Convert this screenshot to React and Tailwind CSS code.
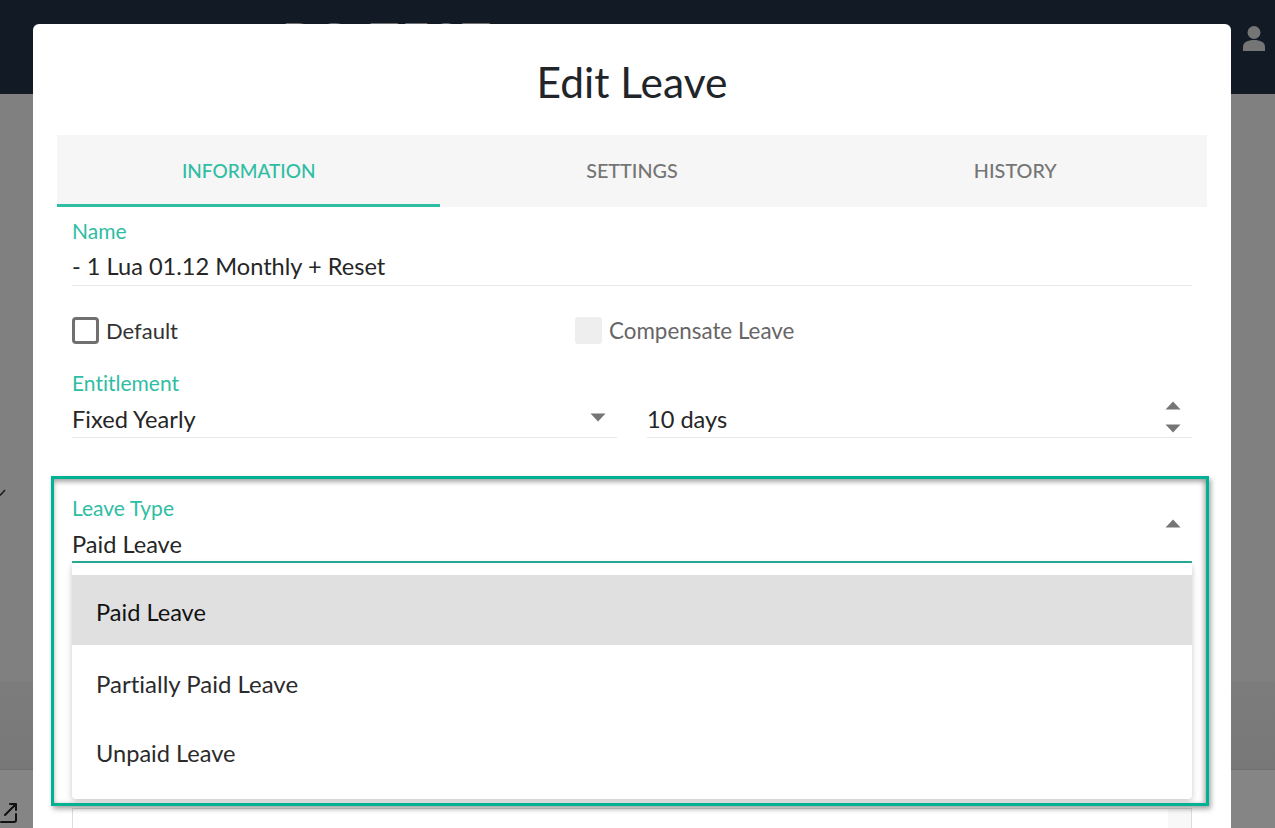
import React from "react";

const font = { fontFamily: 'Lato, "Noto Sans", sans-serif' };

function Tri({ up = false, className = "" }) {
  return (
    <svg width="16" height="9" viewBox="0 0 16 9" className={className}>
      <path d={up ? "M8 0.5 L15.5 8.5 L0.5 8.5 Z" : "M0.5 0.5 L15.5 0.5 L8 8.5 Z"} fill="#757575" />
    </svg>
  );
}

function Tab({ label, active }) {
  return (
    <div
      className={`flex-1 flex items-center justify-center h-[72px] pt-[3px] font-medium border-b-[3px] ${
        active ? "text-[19px] text-[#2fbda3] border-[#2fbda3]" : "text-[19.8px] text-[#757575] border-transparent"
      }`}
    >
      {label}
    </div>
  );
}

function Check({ label, disabled }) {
  return (
    <div className="flex items-center gap-[7px]">
      <div
        className={
          disabled
            ? "w-[27px] h-[27px] rounded-[3px] bg-[#eeeeee]"
            : "w-[27px] h-[27px] rounded-[4px] border-[3px] border-[#707070]"
        }
      />
      <span className={`leading-[30px] ${disabled ? "text-[22.4px] text-[#666666]" : "text-[22px] text-[#333333]"}`}>{label}</span>
    </div>
  );
}

export default function App() {
  return (
    <div className="relative w-[1275px] h-[828px] overflow-hidden bg-[#808080] [font-variant-ligatures:none]" style={font}>
      <header className="h-[94px] bg-[#111a25] flex justify-between pl-[282px] pr-[9px]">
        <div className="text-[48px] font-bold leading-none mt-[16px] text-[#6f7074] tracking-[3px]">PO TEST</div>
        <svg width="24" height="26" viewBox="0 0 24 26" className="mt-[25px]">
          <circle cx="12" cy="7.5" r="6.5" fill="#757575" />
          <path d="M1 26 V22 C1 17 6 15 12 15 C18 15 23 17 23 22 V26 Z" fill="#757575" />
        </svg>
      </header>
      <div className="mt-[588px] h-[87px] bg-gradient-to-b from-[#7c7c7c] to-[#787878]" />
      <div className="h-[59px] border-t border-[#6e6e6e] bg-[#858585] flex items-end pb-[3px]">
        <svg width="24" height="24" viewBox="0 0 24 24" fill="none" stroke="#111111" strokeWidth="2" className="-ml-[5px]" strokeLinecap="round" strokeLinejoin="round">
          <path d="M21 13v6a2 2 0 0 1-2 2H6M15 3h6v6M10 14 21 3" />
        </svg>
      </div>
      <div className="absolute left-0 top-[489px] w-[6px] h-[8px]">
        <svg width="6" height="8" viewBox="0 0 6 8"><path d="M0 6.5 L5 1" stroke="#1c1c1c" strokeWidth="1.6" /></svg>
      </div>

      <div className="absolute left-[33px] top-[24px] w-[1198px] h-[830px] bg-white rounded-t-[6px] px-[24px]">
        <h1 className="h-[111px] flex items-center justify-center text-[42.5px] text-[#212529] pt-[5px]">Edit Leave</h1>
        <div className="flex bg-[#f6f6f6]">
          <Tab label="INFORMATION" active />
          <Tab label="SETTINGS" />
          <Tab label="HISTORY" />
        </div>

        <div className="px-[15px]">
          <div className="h-[79px] border-b border-[#e8e8e8] pt-[11px]">
            <div className="text-[21px] leading-[26px] text-[#2fbda3]">Name</div>
            <div className="text-[23.6px] leading-[32px] mt-[6px] text-[#262626]">- 1 Lua 01.12 Monthly + Reset</div>
          </div>

          <div className="flex h-[64px] items-center pt-[25px]">
            <div className="w-[503px]"><Check label="Default" /></div>
            <Check label="Compensate Leave" disabled />
          </div>

          <div className="flex gap-[30px] mt-[16px]">
            <div className="flex-1 h-[72px] border-b border-[#e8e8e8] relative">
              <div className="text-[21px] leading-[26px] text-[#2fbda3] pt-[4px]">Entitlement</div>
              <div className="text-[23.6px] leading-[32px] mt-[7px] text-[#262626]">Fixed Yearly</div>
              <Tri className="absolute right-[11px] top-[47px]" />
            </div>
            <div className="flex-1 h-[72px] border-b border-[#e8e8e8] relative">
              <div className="text-[23.6px] leading-[32px] mt-[37px] text-[#262626]">10 days</div>
              <Tri up className="absolute right-[11px] top-[35px]" />
              <Tri className="absolute right-[11px] top-[58px]" />
            </div>
          </div>

          <div className="mt-[58px] h-[68px] border-b-2 border-[#2aae9a] relative">
            <div className="text-[21px] leading-[26px] text-[#2fbda3] -mt-[1px]">Leave Type</div>
            <div className="text-[23.6px] leading-[32px] mt-[7px] text-[#262626]">Paid Leave</div>
            <Tri up className="absolute right-[11px] top-[24px]" />
          </div>

          <div className="mt-[245px] h-[40px] border-t border-x border-[#dddddd] flex justify-end">
            <div className="w-[23px] bg-[#f8f8f8]" />
          </div>
        </div>
      </div>

      <div className="absolute left-[72px] top-[563px] w-[1120px] h-[236px] bg-white rounded-[4px] pt-[12px] shadow-[0_2px_6px_rgba(0,0,0,0.22)] text-[23.6px] text-[#2b2b2b]">
        <div className="h-[70px] bg-[#e0e0e0] flex items-center px-[24px] pt-[6px] text-[#111111]">Paid Leave</div>
        <div className="h-[71px] flex items-center px-[24px] pt-[6px] text-[24px]">Partially Paid Leave</div>
        <div className="h-[71px] flex items-center px-[24px] pt-[4px]">Unpaid Leave</div>
      </div>

      <div className="absolute left-[51px] top-[476px] w-[1158px] h-[330px] border-[3px] border-[#00b294] pointer-events-none shadow-[2px_3px_5px_rgba(0,0,0,0.35),inset_0_3px_5px_rgba(0,0,0,0.3),inset_-3px_0_5px_rgba(0,0,0,0.15)]" />
    </div>
  );
}
